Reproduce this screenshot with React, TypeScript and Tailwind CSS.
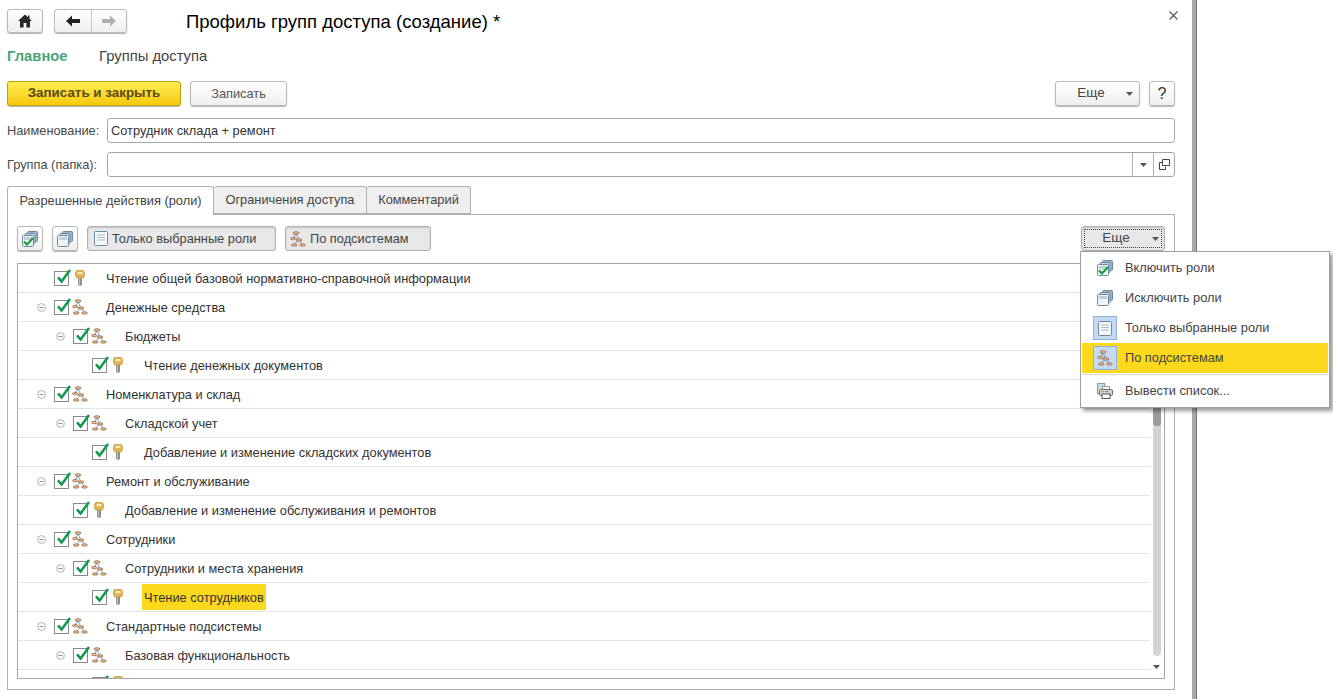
import React from 'react';

const FONT = "font-['Liberation_Sans',Arial,sans-serif]";

type Row = { level: number; kind: 'key' | 'sub'; text: string; toggle?: boolean; mark?: boolean };

const ROWS: Row[] = [
  { level: 0, kind: 'key', text: 'Чтение общей базовой нормативно-справочной информации' },
  { level: 0, kind: 'sub', text: 'Денежные средства', toggle: true },
  { level: 1, kind: 'sub', text: 'Бюджеты', toggle: true },
  { level: 2, kind: 'key', text: 'Чтение денежных документов' },
  { level: 0, kind: 'sub', text: 'Номенклатура и склад', toggle: true },
  { level: 1, kind: 'sub', text: 'Складской учет', toggle: true },
  { level: 2, kind: 'key', text: 'Добавление и изменение складских документов' },
  { level: 0, kind: 'sub', text: 'Ремонт и обслуживание', toggle: true },
  { level: 1, kind: 'key', text: 'Добавление и изменение обслуживания и ремонтов' },
  { level: 0, kind: 'sub', text: 'Сотрудники', toggle: true },
  { level: 1, kind: 'sub', text: 'Сотрудники и места хранения', toggle: true },
  { level: 2, kind: 'key', text: 'Чтение сотрудников', mark: true },
  { level: 0, kind: 'sub', text: 'Стандартные подсистемы', toggle: true },
  { level: 1, kind: 'sub', text: 'Базовая функциональность', toggle: true },
  { level: 2, kind: 'key', text: '' },
];

const Caret = () => (
  <svg width="7" height="4" viewBox="0 0 7 4" className="shrink-0">
    <path d="M0 0h7L3.5 4z" fill="#555" />
  </svg>
);

const HomeIcon = () => (
  <svg width="14" height="14" viewBox="0 0 14 14">
    <path d="M7 0.5L0 7h2v6.5h3.6V9h2.8v4.5H12V7h2L11.5 4.7V1.5H10V3.3z" fill="#2a2a2a" />
  </svg>
);

const ArrowIcon = ({ color, flip }: { color: string; flip?: boolean }) => (
  <svg width="14" height="12" viewBox="0 0 14 12" className={flip ? '-scale-x-100' : ''}>
    <path d="M0 6L6 0.5V4h8v4H6v3.5z" fill={color} />
  </svg>
);

const SubsystemIcon = () => (
  <svg width="16" height="16" viewBox="0 0 16 16" className="shrink-0">
    <path d="M6 2.5L3.4 7M6 2.5L8.6 8.5M8.6 8.5L4.4 13.5M8.6 8.5L12.5 13.5" stroke="#4f86b0" strokeWidth="0.8" fill="none" />
    <ellipse cx="6" cy="2" rx="3" ry="1.3" fill="#e4bd95" stroke="#8f5f33" strokeWidth="0.7" />
    <ellipse cx="3.2" cy="7.6" rx="2.7" ry="1.2" fill="#e4bd95" stroke="#8f5f33" strokeWidth="0.7" />
    <ellipse cx="9" cy="9" rx="2.9" ry="1.2" fill="#e4bd95" stroke="#8f5f33" strokeWidth="0.7" />
    <ellipse cx="4.2" cy="14" rx="2.9" ry="1.2" fill="#e4bd95" stroke="#8f5f33" strokeWidth="0.7" />
    <ellipse cx="12.5" cy="14" rx="2.9" ry="1.2" fill="#e4bd95" stroke="#8f5f33" strokeWidth="0.7" />
  </svg>
);

const KeyIcon = () => (
  <svg width="16" height="16" viewBox="0 0 16 16" className="shrink-0">
    <path d="M6 7h4v8l-2 1-2-1z" fill="#8f8f8a" />
    <path d="M7.4 7.5v7.5" stroke="#c9c9c2" strokeWidth="1" />
    <rect x="3.6" y="0.4" width="8.8" height="7.6" rx="2.2" fill="#e3b655" stroke="#c2973c" strokeWidth="0.8" />
    <rect x="5.4" y="2" width="5.2" height="2" rx="1" fill="#fbeebc" />
  </svg>
);

const Checkbox = () => (
  <span className="relative block w-[15px] h-[15px] shrink-0 border border-[#8a8a8a] bg-white">
    <svg width="17" height="17" viewBox="0 0 17 17" className="absolute -top-[4px] left-0 overflow-visible">
      <path d="M3 9.4l3.6 4.2L15 2" stroke="#0f9a4a" strokeWidth="2.5" fill="none" />
    </svg>
  </span>
);

const MinusCircle = () => (
  <svg width="9" height="9" viewBox="0 0 9 9" className="shrink-0">
    <circle cx="4.5" cy="4.5" r="3.9" fill="#fff" stroke="#a8a8a8" strokeWidth="0.9" />
    <path d="M2.4 4.5h4.2" stroke="#888" strokeWidth="0.9" />
  </svg>
);

const StackIcon = ({ checked }: { checked?: boolean }) => (
  <svg width="16" height="16" viewBox="0 0 16 16" className="shrink-0">
    <rect x="5.5" y="0.5" width="10" height="10" rx="1" fill="#9db4c8" stroke="#6d8aa3" />
    <rect x="3" y="2.5" width="10" height="10" rx="1" fill="#c2d3e1" stroke="#6d8aa3" />
    <rect x="0.5" y="4.5" width="11" height="11" rx="1" fill="#eef4f8" stroke="#6d8aa3" />
    <rect x="2" y="6" width="8" height="3" fill="#bcd0e0" />
    {checked && <path d="M2 10.5l3 3 6-6.5" stroke="#1f9a3d" strokeWidth="2.2" fill="none" />}
  </svg>
);

const ListIcon = () => (
  <svg width="14" height="15" viewBox="0 0 14 15" className="shrink-0">
    <rect x="0.5" y="0.5" width="13" height="14" rx="1" fill="#f5f9fc" stroke="#6d8aa3" />
    <path d="M3 4h8M3 6.5h8M3 9h8" stroke="#a9bccb" />
  </svg>
);

const PrintIcon = () => (
  <svg width="16" height="16" viewBox="0 0 16 16" className="shrink-0">
    <rect x="0.5" y="0.5" width="7" height="10" fill="#c9dcec" stroke="#7d9cb5" />
    <rect x="5.5" y="3.5" width="7" height="4" fill="#fff" stroke="#999" />
    <rect x="2.5" y="6.5" width="13" height="6" rx="1" fill="#d2d2d2" stroke="#6f6f6f" />
    <path d="M4 8.5h3" stroke="#e0a030" />
    <path d="M8 8.5h3" stroke="#50a860" />
    <rect x="5" y="11" width="8" height="4.5" fill="#fff" stroke="#555" />
  </svg>
);

const Button = ({ className, children }: { className: string; children: React.ReactNode }) => (
  <div className={`flex items-center rounded-[3px] border border-[#b8b8b8] bg-gradient-to-b from-white to-[#efefef] shadow-[0_1px_1px_rgba(0,0,0,0.3)] ${className}`}>
    {children}
  </div>
);

const Pressed = ({ className, children }: { className: string; children: React.ReactNode }) => (
  <div className={`flex items-center h-[25px] rounded-[3px] border border-[#b0b0b0] bg-[#e8e8e8] shadow-[inset_0_1px_2px_rgba(0,0,0,0.15)] text-[12.8px] text-[#444] ${className}`}>
    {children}
  </div>
);

const Field = ({ label, value, children }: { label: string; value: string; children?: React.ReactNode }) => (
  <div className="flex items-center h-[25px]">
    <span className="w-[100px] pt-[1px] text-[12.8px] text-[#4a4a4a] whitespace-nowrap">{label}</span>
    <div className="flex-1 flex items-center h-[25px] rounded-[3px] border border-[#a6a6a6] bg-white text-[12.8px] text-[#333]">
      <span className="flex-1 pl-[3px] pt-[1px]">{value}</span>
      {children}
    </div>
  </div>
);

const TreeRow = ({ row }: { row: Row }) => (
  <div className="flex items-center h-[29px] w-[1132px] shrink-0 border-b border-[#e4e4e4]" style={{ paddingLeft: 19 + row.level * 19 }}>
    <span className="w-[17px] shrink-0 flex">{row.toggle && <MinusCircle />}</span>
    <Checkbox />
    <span className="w-[19px] shrink-0 flex justify-end">
      {row.kind === 'key' ? <KeyIcon /> : <SubsystemIcon />}
    </span>
    <span className={`flex items-center h-[26px] pt-[1px] text-[12.8px] text-[#333] whitespace-nowrap ${row.mark ? 'ml-[16px] px-[2px] bg-[#fcd91c]' : 'ml-[18px]'}`}>
      {row.text}
    </span>
  </div>
);

const MenuItem = ({ icon, text, boxed, active }: { icon: React.ReactNode; text: string; boxed?: boolean; active?: boolean }) => (
  <div className={`flex items-center h-[30px] pl-[11px] ${active ? 'h-[29px] mb-[1px] bg-[#fcd91c]' : ''}`}>
    <span className={`flex items-center justify-center w-[24px] h-[24px] shrink-0 ${boxed ? 'bg-[#c5daf3] border border-[#8fb2dc]' : ''}`}>{icon}</span>
    <span className="ml-[8px] text-[12.8px] text-[#444]">{text}</span>
  </div>
);

export default function App() {
  return (
    <div className={`${FONT} relative flex w-[1333px] h-[699px] overflow-hidden bg-white`}>
      <div className="w-[1192px] shrink-0 flex flex-col pl-[7px] pr-[17px]">
        {/* Header */}
        <div className="flex items-center h-[24px] mt-[9px]">
          <Button className="w-[36px] h-[24px] justify-center">
            <HomeIcon />
          </Button>
          <Button className="ml-[11px] w-[73px] h-[24px]">
            <span className="w-[37px] h-full flex items-center justify-center border-r border-[#c8c8c8]">
              <ArrowIcon color="#222" />
            </span>
            <span className="flex-1 flex items-center justify-center">
              <ArrowIcon color="#b0b0b0" flip />
            </span>
          </Button>
          <h1 className="ml-[59px] pt-[2px] text-[18.5px] text-black font-normal whitespace-nowrap">Профиль групп доступа (создание) *</h1>
          <svg width="9" height="9" viewBox="0 0 9 9" className="ml-auto -mr-[3px] mb-[12px]">
            <path d="M0.5 0.5l8 8M8.5 0.5l-8 8" stroke="#555" strokeWidth="1.1" />
          </svg>
        </div>

        {/* Sections */}
        <div className="flex items-center h-[20px] mt-[13px] text-[14.8px]">
          <span className="w-[92px] font-bold text-[#4aa578]">Главное</span>
          <span className="text-[#444]">Группы доступа</span>
        </div>

        {/* Command bar */}
        <div className="flex items-center h-[25px] mt-[15px] text-[12.8px]">
          <div className="flex items-center justify-center w-[174px] h-[25px] rounded-[3px] border border-[#c0a000] bg-gradient-to-b from-[#ffec4d] to-[#f6c900] text-[13.4px] font-bold text-[#5a4a10] shadow-[0_1px_1px_rgba(0,0,0,0.3)]">
            Записать и закрыть
          </div>
          <Button className="ml-[9px] w-[97px] h-[25px] justify-center text-[#555]">Записать</Button>
          <Button className="ml-auto w-[85px] h-[25px] text-[#444]">
            <span className="w-[70px] text-center text-[13.5px]">Еще</span>
            <span className="ml-auto pr-[6px] flex"><Caret /></span>
          </Button>
          <Button className="ml-[9px] w-[26px] h-[25px] justify-center text-[16px] text-[#333]">?</Button>
        </div>

        {/* Fields */}
        <div className="flex flex-col gap-[9px] mt-[12px]">
          <Field label="Наименование:" value="Сотрудник склада + ремонт" />
          <Field label="Группа (папка):" value="">
            <span className="w-[21px] h-full flex items-center justify-center border-l border-[#b0b0b0]"><Caret /></span>
            <span className="w-[21px] h-full flex items-center justify-center border-l border-[#b0b0b0]">
              <svg width="11" height="11" viewBox="0 0 11 11">
                <path d="M3.5 0.5h7v6h-7z" fill="none" stroke="#444" />
                <path d="M3.5 3.5h-3v7h6v-3" fill="none" stroke="#444" />
              </svg>
            </span>
          </Field>
        </div>

        {/* Tabs */}
        <div className="flex h-[29px] mt-[9px] text-[12.8px] text-[#444] relative z-10">
          <div className="flex items-center justify-center w-[207px] h-[29px] bg-white border border-b-0 border-[#b0b0b0] rounded-t-[3px]">Разрешенные действия (роли)</div>
          <div className="flex items-center justify-center w-[153px] h-[28px] bg-[#efefef] border border-l-0 border-[#b0b0b0] rounded-t-[3px]">Ограничения доступа</div>
          <div className="flex items-center justify-center w-[104px] h-[28px] bg-[#efefef] border border-l-0 border-[#b0b0b0] rounded-t-[3px]">Комментарий</div>
        </div>

        {/* Tab panel */}
        <div className="-mt-[1px] h-[476px] border border-[#b0b0b0] px-[9px] pt-[11px]">
          <div className="flex items-center h-[25px]">
            <Button className="w-[26px] h-[25px] justify-center"><StackIcon checked /></Button>
            <Button className="ml-[9px] w-[26px] h-[25px] justify-center"><StackIcon /></Button>
            <Pressed className="ml-[9px] w-[189px] pl-[6px]">
              <ListIcon />
              <span className="ml-[4px]">Только выбранные роли</span>
            </Pressed>
            <Pressed className="ml-[9px] w-[146px] pl-[4px]">
              <SubsystemIcon />
              <span className="ml-[4px]">По подсистемам</span>
            </Pressed>
            <Pressed className="ml-auto w-[84px] relative">
              <span className="absolute inset-[2px] border border-dotted border-[#444]" />
              <span className="w-[68px] text-center text-[13.5px]">Еще</span>
              <span className="ml-auto pr-[5px] flex"><Caret /></span>
            </Pressed>
          </div>

          {/* Role tree */}
          <div className="mt-[12px] h-[416px] w-[1148px] border border-[#a6a6a6] flex overflow-hidden relative">
            <div className="flex flex-col">
              {ROWS.map((row, i) => <TreeRow key={i} row={row} />)}
            </div>
            <div className="absolute right-[3px] top-0 bottom-[22px] w-[8px] rounded-b-[4px] bg-[#d4d4d4]">
              <div className="absolute left-0 right-0 top-[106px] h-[56px] rounded-b-[3px] bg-[#9c9c9c]" />
            </div>
            <div className="absolute right-[4px] bottom-[9px] flex"><Caret /></div>
          </div>
        </div>
      </div>

      {/* Window edge */}
      <div className="w-[5px] shrink-0 bg-[#a8a8a8] border-r border-[#777]" />

      {/* More menu */}
      <div className="absolute left-[1080px] top-[251px] w-[250px] h-[157px] z-20 bg-white border border-[#a0a0a0] shadow-[3px_3px_4px_rgba(0,0,0,0.4)] p-[1px]">
        <MenuItem icon={<StackIcon checked />} text="Включить роли" />
        <MenuItem icon={<StackIcon />} text="Исключить роли" />
        <MenuItem icon={<ListIcon />} text="Только выбранные роли" boxed />
        <MenuItem icon={<SubsystemIcon />} text="По подсистемам" boxed active />
        <div className="h-[1px] mt-[1px] bg-[#dcd8c8]" />
        <div className="mt-[1px]"><MenuItem icon={<PrintIcon />} text="Вывести список..." /></div>
      </div>
    </div>
  );
}
